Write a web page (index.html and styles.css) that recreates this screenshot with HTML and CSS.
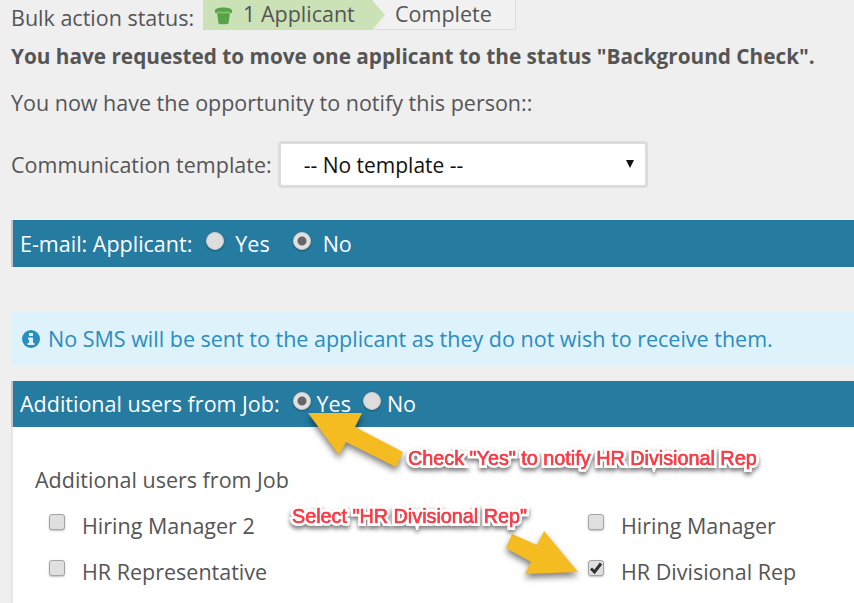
FILE: index.html
```html
<!DOCTYPE html>
<html lang="en">
<head>
    <meta charset="UTF-8">
    <title>Bulk action status</title>
    <link rel="stylesheet" href="styles.css">
</head>
<body>

    <div class="status-row">
        <span class="status-label">Bulk action status:</span>
        <div class="steps">
            <div class="step step-active">
                <svg class="bucket" width="19" height="19" viewBox="0 0 19 19">
                    <path d="M1 4.500C1 2.500 5 1.500 9.500 1.500S18 2.500 18 4.500L18 7L16 7L14.500 17.500C14 18.500 5 18.500 4.500 17.500L3 7L1 7Z" fill="#5aa247"/>
                    <path d="M3 6.500H16" stroke="#8cc47a" stroke-width="1.500"/>
                </svg>
                <span>1 Applicant</span>
            </div>
            <div class="step step-next">Complete</div>
        </div>
    </div>

    <p class="request-text">You have requested to move one applicant to the status "Background Check".</p>
    <p class="notify-text">You now have the opportunity to notify this person::</p>

    <div class="template-row">
        <label>Communication template:</label>
        <div class="select-box">
            <span>-- No template --</span>
            <span class="select-arrow"></span>
        </div>
    </div>

    <div class="bar bar-email">
        <span class="bar-title">E-mail: Applicant:</span>
        <span class="radio"></span>
        <span class="radio-label">Yes</span>
        <span class="radio checked radio-no"></span>
        <span class="radio-label label-no">No</span>
    </div>

    <div class="info-box">
        <svg class="info-icon" width="18" height="18" viewBox="0 0 18 18">
            <circle cx="9" cy="9" r="9" fill="#2a8cc0"/>
            <rect x="7" y="3" width="4" height="3" fill="#dff3fb"/>
            <path d="M6 7.500H11V13H12.500V15H5.500V13H7V9.500H6Z" fill="#dff3fb"/>
        </svg>
        <span>No SMS will be sent to the applicant as they do not wish to receive them.</span>
    </div>

    <div class="bar bar-users">
        <span class="bar-title">Additional users from Job:</span>
        <span class="radio checked"></span>
        <span class="radio-label label-tight">Yes</span>
        <span class="radio radio-tight"></span>
        <span class="radio-label label-tight">No</span>
    </div>

    <div class="users-panel">
        <div class="users-title">Additional users from Job</div>
        <div class="users-grid">
            <label class="user"><span class="checkbox"></span>Hiring Manager 2</label>
            <label class="user"><span class="checkbox"></span>Hiring Manager</label>
            <label class="user"><span class="checkbox"></span>HR Representative</label>
            <label class="user">
                <span class="checkbox">
                    <svg width="14" height="14" viewBox="0 0 14 14">
                        <path d="M2 7.500L5.500 11L12 2.500" fill="none" stroke="#333" stroke-width="3"/>
                    </svg>
                </span>HR Divisional Rep
            </label>
        </div>
    </div>

    <!-- callouts drawn on top of the screenshot -->
    <svg class="arrows" width="854" height="603" viewBox="0 0 854 603">
        <polygon class="arrow" points="308,413 362,413 355,427 403,452 396,467 346,442 339,455"/>
        <polygon class="arrow" points="512,534 506,548 531,562 525,574 578,572 544,531 537,545"/>
    </svg>
    <div class="note note-yes" data-text="Check &quot;Yes&quot; to notify HR Divisional Rep">Check "Yes" to notify HR Divisional Rep</div>
    <div class="note note-select" data-text="Select &quot;HR Divisional Rep&quot;">Select "HR Divisional Rep"</div>

</body>
</html>
```

FILE: styles.css
```css
body {
    font-family: 'Open Sans', sans-serif;
    font-size: 21.5px;
    background-color: #efefef;
    margin: 0;
    color: #555;
    height: 603px;
    overflow: hidden;
    position: relative;
}

p {
    margin: 0;
    padding-left: 11px;
}

/* Status row */
.status-row {
    display: flex;
    height: 31px;
    padding-left: 11px;
}

.status-label {
    margin-top: 3px;
    margin-right: 9px;
}

.steps {
    display: flex;
    width: 313px;
    height: 30px;
    box-sizing: border-box;
    border-right: 1px solid #ddd;
    border-bottom: 1px solid #ddd;
    background-color: #f1f1f1;
}

.step {
    line-height: 27px;
}

.step-active {
    position: relative;
    display: flex;
    width: 169px;
    height: 30px;
    background-color: #cbe2b6;
    padding-left: 11px;
    box-sizing: border-box;
}

.step-active:after {
    content: "";
    position: absolute;
    left: 169px;
    top: 0;
    border-left: 13px solid #cbe2b6;
    border-top: 15px solid transparent;
    border-bottom: 15px solid transparent;
}

.bucket {
    margin-top: 6px;
    margin-right: 10px;
}

.step-next {
    margin-left: 23px;
}

.request-text {
    font-size: 20.75px;
    font-weight: 700;
    line-height: 28px;
    margin-top: 11px;
}

.notify-text {
    line-height: 28px;
    margin-top: 19px;
}

/* Template select */
.template-row {
    display: flex;
    align-items: center;
    padding-left: 11px;
    margin-top: 24px;
}

.template-row label {
    margin-right: 6px;
    margin-top: -1px;
    flex-shrink: 0;
}

.select-box {
    position: relative;
    width: 370px;
    height: 47px;
    box-sizing: border-box;
    border: 3px solid #dcdcdc;
    border-radius: 4px;
    background-color: #fff;
    color: #111;
    font-size: 21px;
    line-height: 43px;
    padding-left: 23px;
}

.select-arrow {
    position: absolute;
    right: 11px;
    top: 16px;
    border-top: 8px solid #111;
    border-left: 4px solid transparent;
    border-right: 4px solid transparent;
}

/* Blue section bars */
.bar {
    display: flex;
    align-items: center;
    margin-left: 11px;
    padding-left: 7px;
    border-left: 2px solid #c2c6c8;
    background-color: #267ba1;
    color: #fff;
}

.bar-email {
    height: 47px;
    margin-top: 32px;
}

.bar-users {
    height: 46px;
    margin-top: 15px;
}

.bar-users .bar-title,
.bar-users .radio-label {
    margin-top: -2px;
}

.bar-title {
    margin-right: 13px;
}

.bar-email .bar-title {
    margin-right: 14px;
}

.radio {
    width: 18px;
    height: 18px;
    box-sizing: border-box;
    border-radius: 50%;
    background-color: #ddd;
    border: 1px solid #ccc;
    box-shadow: 0 1px 2px rgba(0, 0, 0, 0.35);
    margin-top: -6px;
    flex-shrink: 0;
}

.radio.checked {
    background: radial-gradient(circle, #666 0, #666 4px, #e0e0e0 5px);
}

.radio-label {
    margin-left: 11px;
}

.radio-no {
    margin-left: 23px;
}

.radio-label.label-no {
    margin-left: 12px;
}

.radio-label.label-tight {
    margin-left: 6px;
}

.radio-tight {
    margin-left: 12px;
}

/* Info message */
.info-box {
    display: flex;
    align-items: center;
    height: 54px;
    margin-top: 45px;
    margin-left: 11px;
    padding-left: 11px;
    background-color: #ddf2fb;
    color: #2a8cc0;
}

.info-box span {
    margin-top: -2px;
}

.info-icon {
    margin-right: 8px;
    flex-shrink: 0;
}

/* Users panel */
.users-panel {
    margin-left: 11px;
    height: 176px;
    border-left: 2px solid #e6e6e6;
    background-color: #fff;
    padding-top: 39px;
    padding-left: 22px;
    box-sizing: border-box;
}

.users-title {
    line-height: 28px;
}

.users-grid {
    display: grid;
    grid-template-columns: 539px 1fr;
    grid-auto-rows: 46px;
    margin-top: 8px;
    padding-left: 14px;
}

.user {
    display: flex;
    align-items: center;
    height: 46px;
}

.checkbox {
    display: flex;
    align-items: center;
    justify-content: center;
    width: 16px;
    height: 16px;
    box-sizing: border-box;
    margin-top: -6px;
    margin-right: 17px;
    border: 1px solid #a4a4a4;
    border-radius: 3px;
    background-color: #e0e0e0;
    box-shadow: 0 1px 2px rgba(0, 0, 0, 0.25);
}

/* Callouts */
.arrows {
    position: absolute;
    left: 0;
    top: 0;
}

.arrow {
    fill: #f4bc20;
    filter: drop-shadow(0 4px 3px rgba(0, 0, 0, 0.5));
}

.note {
    position: absolute;
    font-family: 'Liberation Sans', sans-serif;
    font-size: 19.8px;
    line-height: 22px;
    color: #fb3c46;
    white-space: nowrap;
    -webkit-text-stroke: 6px #fff;
    paint-order: stroke fill;
    filter: drop-shadow(0 3px 2px rgba(0, 0, 0, 0.5));
}

/* red layer over the white outline, a little heavier than the plain glyphs */
.note:after {
    content: attr(data-text);
    position: absolute;
    left: 0;
    top: 0;
    -webkit-text-stroke: 0.5px #fb3c46;
}

.note-yes {
    left: 408px;
    top: 447px;
}

.note-select {
    left: 292px;
    top: 505px;
}
```
